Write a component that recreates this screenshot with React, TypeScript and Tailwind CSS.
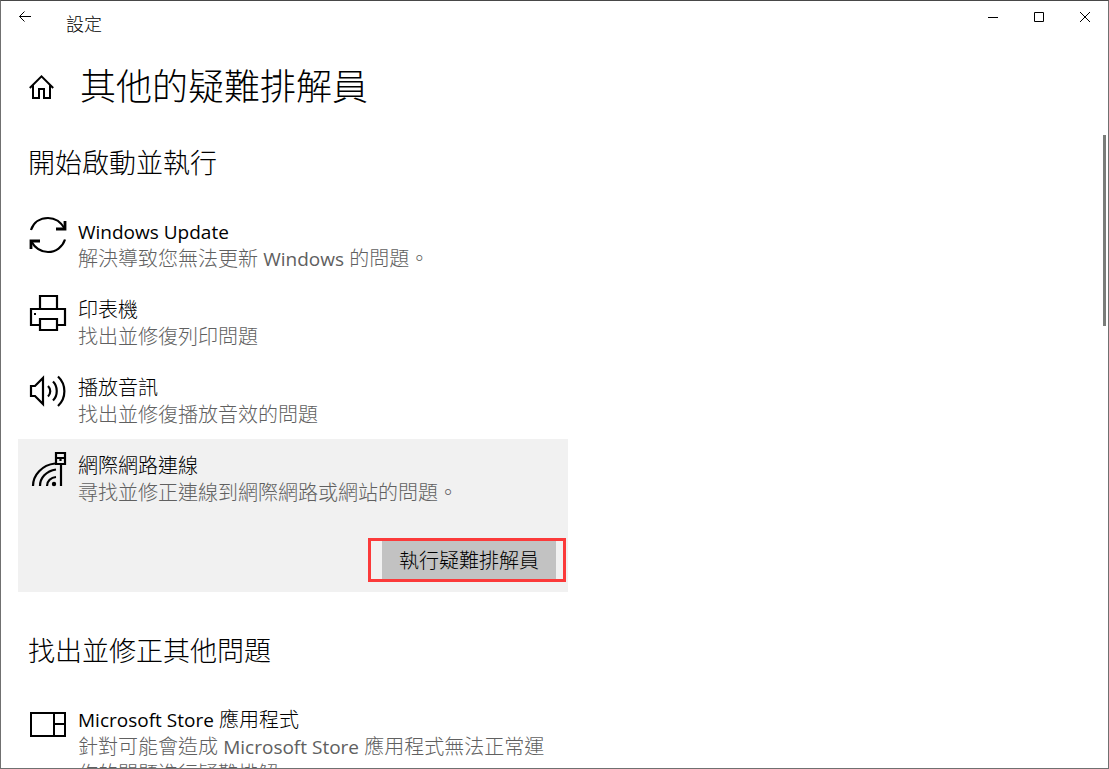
import React from 'react';

interface Troubleshooter {
  icon: React.FC;
  title: string;
  description: string;
  expanded?: boolean;
}

interface Section {
  heading: string;
  items: Troubleshooter[];
}

const iconProps = {
  width: 38,
  height: 38,
  viewBox: '0 0 38 38',
  fill: 'none',
  stroke: '#000',
  strokeWidth: 2.2,
  'aria-hidden': true
} as const;

const UpdateIcon: React.FC = () => (
  <svg {...iconProps}>
    <path d="M2 14C4.500 6.500 11 2 19 2c7 0 13 4 17 11M36 23.500C33.500 31 27 36 19 36c-7 0-13-4-17-11" />
    <path d="M36 5v8H27M2 33v-8H11" strokeWidth="2.800" />
  </svg>
);

const PrinterIcon: React.FC = () => (
  <svg {...iconProps}>
    <path d="M11 15V2h17v13M11 31H2V15h34v16h-8M11 25h17v11H11z" />
    <path d="M5 20h2" />
  </svg>
);

const AudioIcon: React.FC = () => (
  <svg {...iconProps}>
    <path d="M2 14v10h4l8 8V6l-8 8z" />
    <path d="M19 14c3 3 3 7.500 0 10.500M24 9.500c5 5 5 14 0 19M29 4.500c8.500 8 8.500 21.500 0 29.500" />
  </svg>
);

const NetworkIcon: React.FC = () => (
  <svg {...iconProps}>
    <path d="M4 36C4 25 13 15 26 13.500M11 36c0-8 6-15 16-16.500M18 36c0-5 4-8.500 9-9" />
    <circle cx="25" cy="34" r="2.200" fill="#000" stroke="none" />
    <path d="M27 3h9v11h-9zM27 8h9M31.500 8v3M32 14v22" />
  </svg>
);

const StoreIcon: React.FC = () => (
  <svg {...iconProps} strokeWidth={2}>
    <path d="M2 9h34v23H2zM25 9v23M25 20h11" />
  </svg>
);

const SECTIONS: readonly Section[] = [
  {
    heading: '開始啟動並執行',
    items: [
      { icon: UpdateIcon, title: 'Windows Update', description: '解決導致您無法更新 Windows 的問題。' },
      { icon: PrinterIcon, title: '印表機', description: '找出並修復列印問題' },
      { icon: AudioIcon, title: '播放音訊', description: '找出並修復播放音效的問題' },
      {
        icon: NetworkIcon,
        title: '網際網路連線',
        description: '尋找並修正連線到網際網路或網站的問題。',
        expanded: true
      }
    ]
  },
  {
    heading: '找出並修正其他問題',
    items: [
      {
        icon: StoreIcon,
        title: 'Microsoft Store 應用程式',
        description: '針對可能會造成 Microsoft Store 應用程式無法正常運作的問題進行疑難排解。'
      }
    ]
  }
];

// Latin words are set slightly smaller and heavier than the light CJK text around them
const MixedText: React.FC<{ text: string }> = ({ text }) => (
  <>
    {text.split(/([A-Za-z]+(?: [A-Za-z]+)*)/).map((part, index) =>
      /^[A-Za-z]/.test(part) ? (
        <span key={index} className="text-[19px] leading-none font-normal">
          {part}
        </span>
      ) : (
        part
      )
    )}
  </>
);

const TroubleshooterRow: React.FC<{ item: Troubleshooter }> = ({ item }) => {
  const Icon = item.icon;

  return (
    <li className={item.expanded ? 'bg-[#f1f1f1] px-3 pt-[13px] pb-[10px]' : 'px-3 pt-[13px] pb-[11px]'}>
      <div className="flex items-start gap-[11px]">
        <div className="-ml-px -mt-0.5 shrink-0">
          <Icon />
        </div>
        <div className="min-w-0 text-[20px] leading-[27px]">
          <h3 className="text-black">
            <MixedText text={item.title} />
          </h3>
          <p className="text-[#606060]">
            <MixedText text={item.description} />
          </p>
        </div>
      </div>
      {item.expanded && (
        <div className="-mr-[10px] mt-8 flex justify-end">
          <div className="border-[3px] border-[#fb3a3a] pl-[11px] pr-[7px]">
            <button type="button" className="block h-[38px] bg-[#c2c2c2] px-[17px] pt-px text-[20px] leading-[27px] text-black">
              執行疑難排解員
            </button>
          </div>
        </div>
      )}
    </li>
  );
};

const TitleBar: React.FC = () => (
  <header className="flex h-[46px] items-start justify-between">
    <div className="flex items-start">
      <button type="button" aria-label="返回" className="flex h-8 w-12 items-center justify-center">
        <svg width="14" height="12" viewBox="0 0 14 12" fill="none" stroke="#000" aria-hidden="true">
          <path d="M13 5.500H1.500M6.500 .5L1.500 5.500l5 5" />
        </svg>
      </button>
      <span className="ml-[17px] mt-[9px] text-[18px] leading-7">設定</span>
    </div>
    <div className="flex">
      <button type="button" aria-label="最小化" className="flex h-8 w-[46px] items-center justify-center">
        <svg width="10" height="10" viewBox="0 0 10 10" stroke="#000" aria-hidden="true">
          <path d="M0 5.500h10" />
        </svg>
      </button>
      <button type="button" aria-label="最大化" className="flex h-8 w-[46px] items-center justify-center">
        <svg width="10" height="10" viewBox="0 0 10 10" fill="none" stroke="#000" aria-hidden="true">
          <path d="M.5 .5h9v9h-9z" />
        </svg>
      </button>
      <button type="button" aria-label="關閉" className="flex h-8 w-[46px] items-center justify-center">
        <svg width="10" height="10" viewBox="0 0 10 10" stroke="#000" aria-hidden="true">
          <path d="M0 0l10 10M10 0L0 10" />
        </svg>
      </button>
    </div>
  </header>
);

const App: React.FC = () => {
  return (
    <div className="relative flex h-screen flex-col overflow-hidden border border-[#707070] border-t-[#484848] bg-white font-['Open_Sans','Noto_Sans_CJK_TC',sans-serif] font-light text-black">
      <TitleBar />

      <div className="flex shrink-0 items-center gap-[26px] pl-[28px] pt-[21px]">
        <a href="#home" aria-label="首頁">
          <svg width="25" height="24" viewBox="0 0 25 24" fill="none" stroke="#000" strokeWidth="2" aria-hidden="true">
            <path d="M.8 13L12.500 1.400 24.200 13M4 10.500V23h6v-9h5v9h6V10.500" />
          </svg>
        </a>
        <h1 className="text-[36px] leading-[48px]">其他的疑難排解員</h1>
      </div>

      {/* Troubleshooter list */}
      <main className="min-h-0 grow overflow-hidden pl-[17px] pt-[34px]">
        {SECTIONS.map((section) => (
          <section key={section.heading} className="mb-[41px] max-w-[550px]">
            <h2 className="mb-6 pl-[10px] text-[27px] leading-9">{section.heading}</h2>
            <ul>
              {section.items.map((item) => (
                <TroubleshooterRow key={item.title} item={item} />
              ))}
            </ul>
          </section>
        ))}
      </main>

      {/* Scrollbar thumb */}
      <div className="absolute right-[2px] top-[134px] h-[191px] w-[3px] bg-[#7a7d7a]" />
    </div>
  );
};

export default App;
